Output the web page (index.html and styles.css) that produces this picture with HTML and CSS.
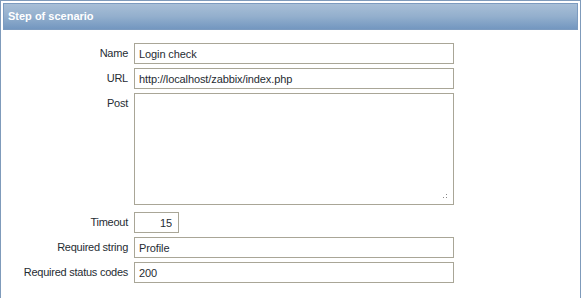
FILE: index.html
```html
<!DOCTYPE html>
<html>

<head>
    <title>Step of scenario</title>
    <link rel="stylesheet" href="styles.css">
</head>

<body>

    <div class="form-box">
        <div class="form-header">Step of scenario</div>
        <div class="form-body">
            <label class="lbl">Name</label>
            <div><input class="field wide" type="text" value="Login check"></div>

            <label class="lbl">URL</label>
            <div><input class="field wide" type="text" value="http://localhost/zabbix/index.php"></div>

            <label class="lbl">Post</label>
            <div class="area-wrap">
                <textarea class="field area"></textarea>
                <svg class="grip" width="6" height="6" viewBox="0 0 6 6">
                    <rect x="0" y="4" width="1" height="1" fill="#8a8a8a"/>
                    <rect x="3" y="1" width="1" height="1" fill="#8a8a8a"/>
                    <rect x="3" y="4" width="1" height="1" fill="#8a8a8a"/>
                </svg>
            </div>

            <label class="lbl timeout-lbl">Timeout</label>
            <div class="timeout-cell"><input class="field small" type="text" value="15"></div>

            <label class="lbl">Required string</label>
            <div><input class="field wide" type="text" value="Profile"></div>

            <label class="lbl">Required status codes</label>
            <div><input class="field wide" type="text" value="200"></div>
        </div>
    </div>

</body>
</html>
```

FILE: styles.css
```css
body {
    margin: 0;
    font-family: "Liberation Sans", Arial, sans-serif;
    font-size: 11px;
    color: #1f2c33;
    background: #ffffff;
}
.form-box {
    width: 575px;
    height: 293px;
    border: 1px solid #7f9bbb;
    padding: 2px;
    background: #ffffff;
}
.form-header {
    height: 25px;
    line-height: 25px;
    padding-left: 4px;
    border: 1px solid #7c9bbf;
    background: linear-gradient(#a8bfd7, #93afcd 50%, #7397c0);
    color: #ffffff;
    font-weight: bold;
    font-size: 11px;
}
.form-body {
    display: grid;
    grid-template-columns: 125px 1fr;
    column-gap: 6px;
    row-gap: 4px;
    padding-top: 13px;
}
.lbl {
    text-align: right;
    padding-top: 4px;
    line-height: 13px;
    letter-spacing: -0.25px;
}
.timeout-lbl,
.timeout-cell {
    margin-top: 3px;
}
.field {
    display: block;
    box-sizing: border-box;
    height: 21px;
    margin: 0;
    border: 1px solid #a9a697;
    padding: 0 4px;
    font-family: "Liberation Sans", Arial, sans-serif;
    font-size: 11px;
    letter-spacing: -0.1px;
    color: #1f2c33;
    background: #ffffff;
    outline: none;
}
.wide {
    width: 320px;
}
.area-wrap {
    position: relative;
    width: 320px;
}
.area {
    width: 320px;
    height: 112px;
    padding: 3px 4px;
    resize: none;
}
.grip {
    position: absolute;
    right: 5px;
    bottom: 6px;
}
.small {
    width: 45px;
    text-align: right;
    padding-right: 6px;
}
```
